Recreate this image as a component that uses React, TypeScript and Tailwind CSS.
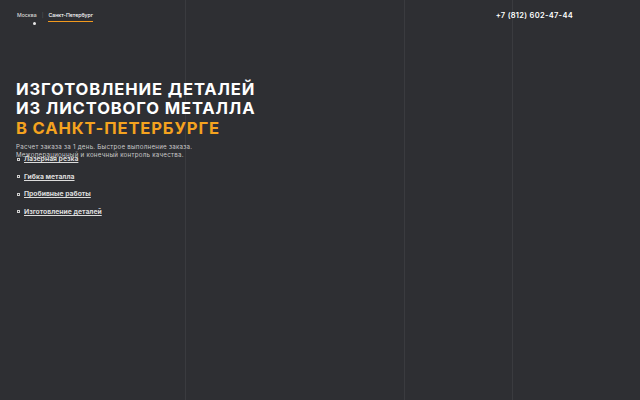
import React from 'react';

const services = ['Лазерная резка', 'Гибка металла', 'Пробивные работы', 'Изготовление деталей'];

export default function App() {
  return (
    <div className="relative w-[640px] h-[400px] overflow-hidden bg-[#2e2f33] text-white" style={{ fontFamily: 'Inter, "DejaVu Sans", sans-serif' }}>
      {/* background grid lines */}
      <div className="absolute inset-0 pointer-events-none">
        <div className="absolute top-0 bottom-0 left-[185px] w-px bg-[#3a3b3f]" />
        <div className="absolute top-0 bottom-0 left-[404px] w-px bg-[#3a3b3f]" />
        <div className="absolute top-0 bottom-0 left-[512px] w-px bg-[#3a3b3f]" />
      </div>

      <div className="relative">
        <header className="flex items-start justify-between pl-[17px] pr-[67px] pt-[12px]">
          <div className="flex items-start gap-[5px] text-[5.2px] font-medium text-[#d8d8d8]">
            <div className="flex flex-col items-end">
              <span>Москва</span>
              <span className="mt-[2px] mr-[1px] w-[3px] h-[3px] rounded-full bg-[#e8e8e8]" />
            </div>
            <span className="text-[#55565a]">|</span>
            <span className="border-b border-[#f29a1f] pb-[1px] text-white">Санкт-Петербург</span>
          </div>
          <div className="text-[7.5px] font-semibold tracking-[0.3px] mt-[-2px]">+7 (812) 602-47-44</div>
        </header>

        <section className="pl-[16px] pt-[55px]">
          <h1 className="text-[16.6px] leading-[19.5px] font-bold tracking-[0.85px] uppercase">
            Изготовление деталей<br />
            из листового металла<br />
            <span className="text-[#f5a31f]">в Санкт-Петербурге</span>
          </h1>
          <p className="mt-[5px] text-[6.2px] leading-[8px] tracking-[0.25px] text-[#c9c9c9]">
            Расчет заказа за 1 день. Быстрое выполнение заказа.<br />
            Межоперационный и конечный контроль качества.
          </p>
          <ul className="mt-[-4px] flex flex-col gap-[9.5px]">
            {services.map(s => (
              <li key={s} className="flex items-center gap-[4px] text-[6.8px] leading-[8px] font-bold text-[#dcdcdc]">
                <span className="w-[3px] h-[3px] border border-[#cfcfcf] ml-[1px]" />
                <span className="underline underline-offset-[1px]">{s}</span>
              </li>
            ))}
          </ul>
        </section>
      </div>
    </div>
  );
}
